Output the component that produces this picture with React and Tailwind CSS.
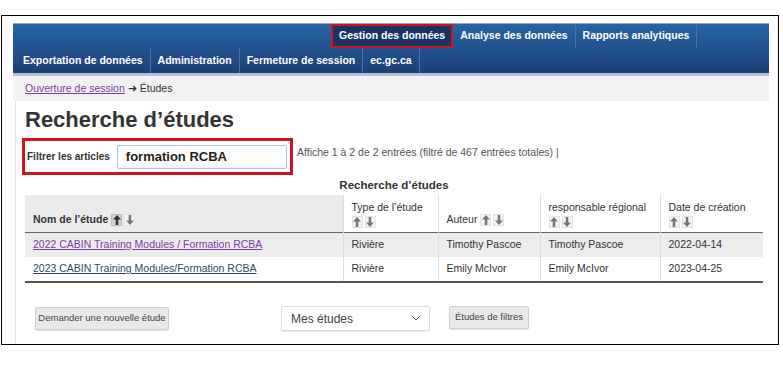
import React from "react";

function Up({ active }) {
  return (
    <span className={`inline-flex items-center justify-center w-[11px] h-[12px] ${active ? "bg-[#d4d4d4] border border-[#bbb]" : "bg-[#f4f4f4] border border-[#e2e2e2]"}`}>
      <svg width="8" height="10" viewBox="0 0 8 10">
        <path d="M4 0 L8 4.5 L5.3 4.5 L5.3 10 L2.7 10 L2.7 4.5 L0 4.5 Z" fill={active ? "#333" : "#777"} />
      </svg>
    </span>
  );
}
function Down() {
  return (
    <span className="inline-flex items-center justify-center w-[11px] h-[12px] bg-[#f4f4f4] border border-[#e2e2e2]">
      <svg width="8" height="10" viewBox="0 0 8 10">
        <path d="M4 10 L8 5.5 L5.3 5.5 L5.3 0 L2.7 0 L2.7 5.5 L0 5.5 Z" fill="#777" />
      </svg>
    </span>
  );
}
function Sort({ active }) {
  return (
    <span className="inline-flex gap-[2px] align-middle">
      <Up active={active} />
      <Down />
    </span>
  );
}

export default function App() {
  const font = { fontFamily: '"Liberation Sans", Arial, sans-serif' };
  return (
    <div className="w-[783px] h-[366px] bg-white pt-[15px] pl-[1px]" style={font}>
      <div className="w-[778px] h-[330px] border-[1.5px] border-black pl-[11px] pt-[7px] overflow-hidden">
        {/* nav */}
        <div className="w-[756px] bg-gradient-to-b from-[#2565a6] to-[#1d3d74] border-t border-[#8fa5c2]">
          <div className="flex h-[24px] pl-[318px] items-stretch">
            <div className="flex items-center px-[6px] bg-[#1a3360] border-2 border-[#d0131d] text-white text-[10.5px] font-bold">Gestion des données</div>
            <div className="flex items-center px-[7px] border-r border-[#4f70a0] text-white text-[10.5px] font-bold">Analyse des données</div>
            <div className="flex items-center px-[7px] border-r border-[#4f70a0] text-white text-[10.5px] font-bold">Rapports analytiques</div>
          </div>
          <div className="flex h-[25px] pl-[3px] items-stretch">
            <div className="flex items-center px-[7px] border-r border-[#4f70a0] text-white text-[10.5px] font-bold">Exportation de données</div>
            <div className="flex items-center px-[7px] border-r border-[#4f70a0] text-white text-[10.5px] font-bold">Administration</div>
            <div className="flex items-center px-[7px] border-r border-[#4f70a0] text-white text-[10.5px] font-bold">Fermeture de session</div>
            <div className="flex items-center px-[7px] border-r border-[#4f70a0] text-white text-[10.5px] font-bold">ec.gc.ca</div>
          </div>
          <div className="h-[3px] bg-[#b4c0d2]"></div>
        </div>
        <div className="w-[756px] h-[25px] bg-[#f2f2f2] flex items-center pl-[12px] text-[10.5px] text-[#333]">
          <a className="text-[#7a3fa0] underline">Ouverture de session</a>
          <span className="ml-[3px]">➜ Études</span>
        </div>
        {/* content */}
        <div className="w-[756px] h-[258px] ml-[2px] border-l border-[#e4e4e4] pl-[9px]">
          <h1 className="text-[22px] font-bold text-[#333] leading-none pt-[8px]">Recherche d’études</h1>
          <div className="flex items-start mt-[7px] -ml-[3px]">
            <div className="w-[271px] h-[37px] border-[3px] border-[#d0131d] flex items-center pl-[2px]">
              <span className="text-[10px] font-bold text-[#333] mr-[7px]">Filtrer les articles</span>
              <div className="w-[170px] h-[24px] border border-[#a9c4e0] rounded-[2px] flex items-center pl-[8px] text-[13px] font-bold text-[#222]">formation RCBA</div>
            </div>
            <span className="ml-[4px] mt-[7px] text-[10.5px] text-[#555]">Affiche 1 à 2 de 2 entrées (filtré de 467 entrées totales) |</span>
          </div>
          <div className="w-[738px] text-center text-[11.5px] font-bold text-[#333] mt-[0px] leading-[20px]">Recherche d’études</div>
          <table className="w-[738px] border-collapse text-[10.5px] text-[#333] table-fixed">
            <colgroup>
              <col className="w-[318px]" />
              <col className="w-[95px]" />
              <col className="w-[102px]" />
              <col className="w-[120px]" />
              <col className="w-[103px]" />
            </colgroup>
            <thead>
              <tr className="h-[37px] border-b-[1.5px] border-[#666]">
                <th className="bg-[#ebebeb] text-left align-bottom pb-[4px] pl-[8px] font-bold">Nom de l’étude <Sort active /></th>
                <th className="text-left align-top pt-[5px] pl-[8px] font-normal border-l border-[#ddd] leading-[14px]">Type de l’étude<br /><Sort /></th>
                <th className="text-left align-bottom pb-[4px] pl-[8px] font-normal border-l border-[#ddd]">Auteur <Sort /></th>
                <th className="text-left align-top pt-[5px] pl-[8px] font-normal border-l border-[#ddd] leading-[14px]">responsable régional<br /><Sort /></th>
                <th className="text-left align-top pt-[5px] pl-[8px] font-normal border-l border-[#ddd] leading-[14px]">Date de création<br /><Sort /></th>
              </tr>
            </thead>
            <tbody>
              <tr className="h-[25px] bg-[#ececec]">
                <td className="pl-[8px]"><a className="text-[#7a3fa0] underline">2022 CABIN Training Modules / Formation RCBA</a></td>
                <td className="pl-[8px] border-l border-[#ddd]">Rivière</td>
                <td className="pl-[8px] border-l border-[#ddd]">Timothy Pascoe</td>
                <td className="pl-[8px] border-l border-[#ddd]">Timothy Pascoe</td>
                <td className="pl-[8px] border-l border-[#ddd]">2022-04-14</td>
              </tr>
              <tr className="h-[25px] bg-white border-b-2 border-[#555]">
                <td className="pl-[8px]"><a className="text-[#2e4a66] underline">2023 CABIN Training Modules/Formation RCBA</a></td>
                <td className="pl-[8px] border-l border-[#ddd]">Rivière</td>
                <td className="pl-[8px] border-l border-[#ddd]">Emily McIvor</td>
                <td className="pl-[8px] border-l border-[#ddd]">Emily McIvor</td>
                <td className="pl-[8px] border-l border-[#ddd]">2023-04-25</td>
              </tr>
            </tbody>
          </table>
          <div className="flex items-start mt-[24px] pl-[10px]">
            <button className="w-[134px] h-[23px] bg-[#e9e9e9] border border-[#d0d0d0] rounded-[2px] shadow-[0_1px_1px_rgba(0,0,0,0.12)] text-[9.5px] text-[#444]">Demander une nouvelle étude</button>
            <div className="ml-[112px] -mt-[1px] w-[149px] h-[25px] bg-white border border-[#ddd] rounded-[2px] shadow-[0_1px_1px_rgba(0,0,0,0.08)] flex items-center justify-between px-[9px] text-[12px] text-[#444]">
              <span>Mes études</span>
              <svg width="8" height="5" viewBox="0 0 8 5"><path d="M0.5 0.5 L4 4 L7.5 0.5" fill="none" stroke="#555" strokeWidth="1" /></svg>
            </div>
            <button className="ml-[19px] -mt-[1px] w-[80px] h-[23px] bg-[#e9e9e9] border border-[#d0d0d0] rounded-[2px] shadow-[0_1px_1px_rgba(0,0,0,0.12)] text-[9.5px] text-[#444]">Études de filtres</button>
          </div>
        </div>
      </div>
    </div>
  );
}
